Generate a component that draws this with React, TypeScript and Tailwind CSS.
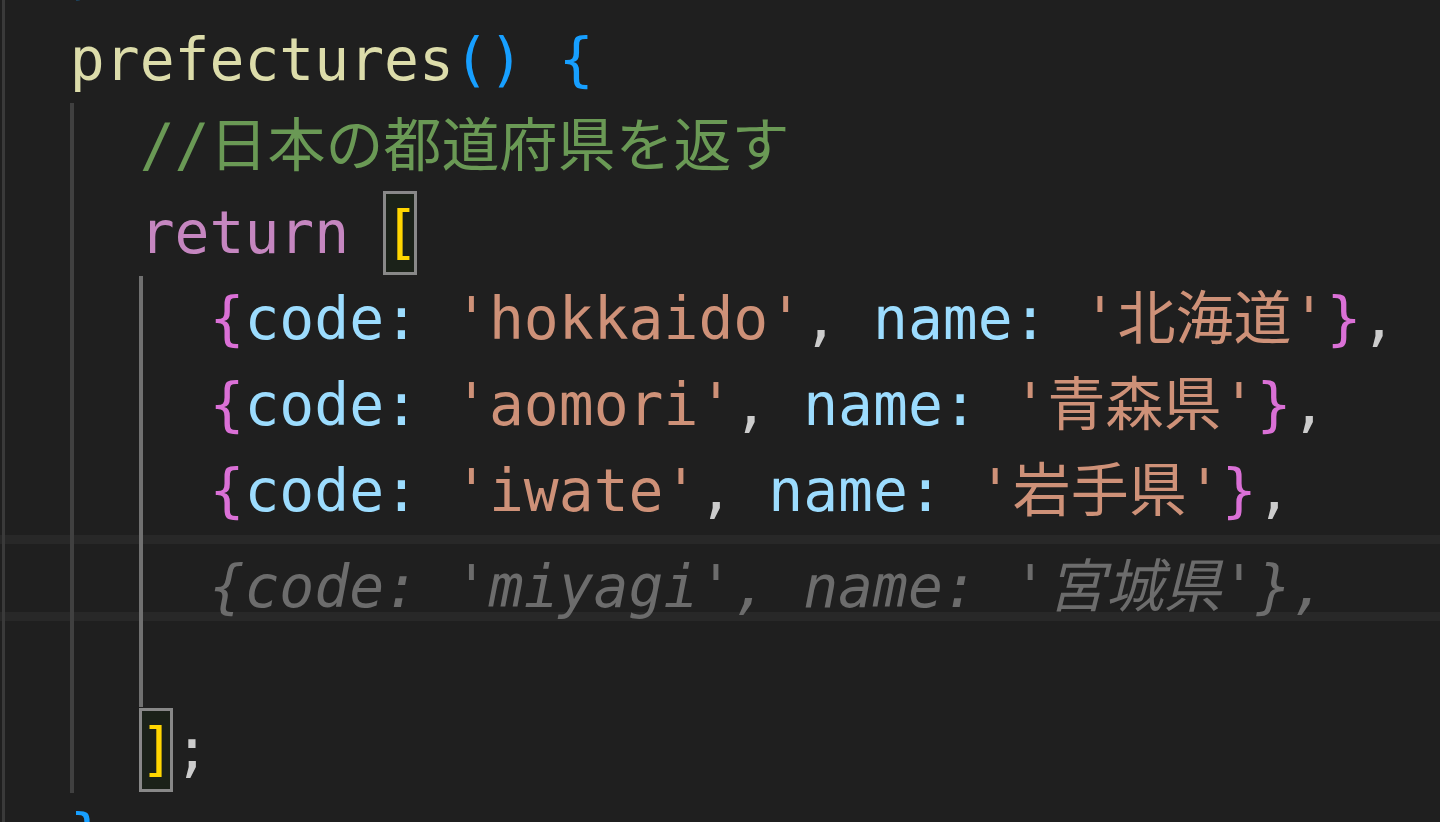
import React from 'react';

const guideStyle: Record<number, string> = {
  0: 'left-[2px] w-[3px] bg-[#3a3a3a]',
  2: 'left-[70px] w-[4px] bg-[#404040]',
  4: 'left-[139px] w-[4px] bg-[#707070]',
};

function Line({
  guides = [],
  current = false,
  shift = '',
  children,
}: {
  guides?: number[];
  current?: boolean;
  shift?: string;
  children?: React.ReactNode;
}) {
  return (
    <div
      className={`relative h-[86.25px] whitespace-pre leading-[86.25px] ${
        current ? 'border-y-[9px] border-[#282828] leading-[68.25px]' : ''
      }`}
    >
      {guides.map((g) => (
        <div
          key={g}
          className={`absolute ${current ? '-top-[9px] -bottom-[9px]' : 'top-0 bottom-0'} ${guideStyle[g]}`}
        />
      ))}
      <span className={`relative ${shift}`}>{children}</span>
    </div>
  );
}

// bracket-match highlight around the bracket under the cursor
function MatchBox({ children }: { children: React.ReactNode }) {
  return (
    <span className="relative">
      <span className="absolute -left-[1px] -top-[8px] h-[84px] w-[34px] border-[3px] border-[#888888] bg-[#1b2219]" />
      <span className="relative text-[#ffd700]">{children}</span>
    </span>
  );
}

const P = ({ c }: { c: string }) => <span className="text-[#cccccc]">{c}</span>;
const Prop = ({ c }: { c: string }) => <span className="text-[#9cdcfe]">{c}</span>;
const Str = ({ c }: { c: string }) => <span className="text-[#ce9178]">{c}</span>;
const Br2 = ({ c }: { c: string }) => <span className="text-[#da70d6]">{c}</span>;
const Br3 = ({ c }: { c: string }) => <span className="text-[#179fff]">{c}</span>;

function Entry({ code, name }: { code: string; name: string }) {
  return (
    <>
      {'      '}
      <Br2 c="{" />
      <Prop c="code:" />
      {' '}
      <Str c={`'${code}'`} />
      <P c=", " />
      <Prop c="name:" />
      {' '}
      <Str c={`'${name}'`} />
      <Br2 c="}" />
      <P c="," />
    </>
  );
}

export default function App() {
  return (
    <div className="h-[822px] w-[1440px] overflow-hidden bg-[#1f1f1f]">
      <div
        className="mt-[-69.25px] text-[58px] text-[#cccccc]"
        style={{ fontFamily: '"DejaVu Sans Mono", "Noto Sans CJK JP", monospace' }}
      >
        <Line guides={[0]} shift="-top-[3px]">
          {'  '}
          <Br3 c="}" />
          <P c="," />
        </Line>
        <Line guides={[0]}>
          {'  '}
          <span className="text-[#dcdcaa]">prefectures</span>
          <Br3 c="()" />
          {' '}
          <Br3 c="{" />
        </Line>
        <Line guides={[0, 2]}>
          {'    '}
          <span className="text-[#6a9955]">//日本の都道府県を返す</span>
        </Line>
        <Line guides={[0, 2]}>
          {'    '}
          <span className="text-[#c586c0]">return</span>
          {' '}
          <MatchBox>[</MatchBox>
        </Line>
        <Line guides={[0, 2, 4]}>
          <Entry code="hokkaido" name="北海道" />
        </Line>
        <Line guides={[0, 2, 4]}>
          <Entry code="aomori" name="青森県" />
        </Line>
        <Line guides={[0, 2, 4]}>
          <Entry code="iwate" name="岩手県" />
        </Line>
        <Line guides={[0, 2, 4]} current>
          {'      '}
          <span className="italic text-[#6c6c6c]">{"{code: 'miyagi', name: '宮城県'},"}</span>
        </Line>
        <Line guides={[0, 2, 4]} />
        <Line guides={[0, 2]}>
          {'    '}
          <MatchBox>]</MatchBox>
          <P c=";" />
        </Line>
        <Line guides={[0]}>
          {'  '}
          <Br3 c="}" />
        </Line>
      </div>
    </div>
  );
}
